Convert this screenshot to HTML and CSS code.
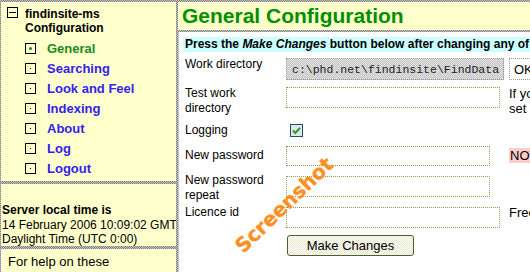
FILE: index.html
```html
<!DOCTYPE html>
<html lang="en">
<head>
    <meta charset="UTF-8">
    <meta name="viewport" content="width=device-width, initial-scale=1.0">
    <title>findinsite-ms - General Configuration</title>
<link rel="stylesheet" href="styles.css">
</head>
<body>
    <div class="frameset">
        <div class="side">
            <div class="panel nav">
                <div class="tree-root">
                    <span class="toggle"></span>
                    <div class="title">findinsite-ms<br>Configuration</div>
                </div>
                <ul class="menu">
                    <li class="current"><span class="bullet"></span><a href="#">General</a></li>
                    <li><span class="bullet"></span><a href="#">Searching</a></li>
                    <li><span class="bullet"></span><a href="#">Look and Feel</a></li>
                    <li><span class="bullet"></span><a href="#">Indexing</a></li>
                    <li><span class="bullet"></span><a href="#">About</a></li>
                    <li><span class="bullet"></span><a href="#">Log</a></li>
                    <li><span class="bullet"></span><a href="#">Logout</a></li>
                </ul>
            </div>
            <div class="panel clock">
                <b>Server local time is</b><br>
                14 February 2006 10:09:02 GMT<br>
                Daylight Time (UTC 0:00)
            </div>
            <div class="panel help">
                For help on these<br>configuration options, see the manual.
            </div>
        </div>

        <div class="main">
            <div class="header">
                <h1>General Configuration</h1>
            </div>
            <div class="content">
                <p class="notice">Press the <i>Make Changes</i> button below after changing any of the settings above.</p>

                <form class="form" id="configForm">
                    <div class="row row-dir">
                        <label for="workDir">Work directory</label>
                        <input type="text" id="workDir" class="input input-readonly w-218" value="c:\phd.net\findinsite\FindData" readonly>
                        <span class="note note-ok">OK</span>
                    </div>
                    <div class="row row-test">
                        <label for="testDir">Test work<br>directory</label>
                        <input type="text" id="testDir" class="input w-214">
                        <span class="note">If you want to test,<br>set a test directory</span>
                    </div>
                    <div class="row row-log">
                        <label>Logging</label>
                        <svg class="check" width="13" height="13" viewBox="0 0 13 13">
                            <rect x="0.5" y="0.5" width="12" height="12" fill="#e4e4e4" stroke="#1c4f80"/>
                            <path d="M3 6.5 L5.3 9 L10 3.8" fill="none" stroke="#22a022" stroke-width="2"/>
                        </svg>
                    </div>
                    <div class="row row-pass">
                        <label for="newPass">New password</label>
                        <input type="password" id="newPass" class="input w-204">
                        <span class="note note-warn">NOT SET</span>
                    </div>
                    <div class="row row-repeat">
                        <label for="newPass2">New password<br>repeat</label>
                        <input type="password" id="newPass2" class="input w-204">
                    </div>
                    <div class="row row-licence">
                        <label for="licence">Licence id</label>
                        <input type="text" id="licence" class="input w-214">
                        <span class="note">Free version</span>
                    </div>
                    <div class="row row-submit">
                        <span></span>
                        <button type="submit" class="btn-submit">Make Changes</button>
                    </div>
                </form>
            </div>
        </div>
    </div>

    <div class="stamp">Screenshot</div>

    <script>
        document.getElementById('configForm').addEventListener('submit', (e) => {
            e.preventDefault();
        });
    </script>
</body>
</html>
```

FILE: styles.css
```css
/* Global Styles */
:root {
    --frame: #ffffcc;
    --frame-edge: repeating-conic-gradient(#808080 0 25%, #c4c4c4 0 50%) 0 0 / 2px 2px;
    --link: #3322ee;
    --current: #1a8a1a;
    --field-edge: #8c9c5c;
}

* {
    margin: 0;
    padding: 0;
    box-sizing: border-box;
}

body {
    font-family: "Liberation Sans", Arial, sans-serif;
    font-size: 12px;
    color: #000;
    background: var(--frame-edge);
    height: 100vh;
    overflow: hidden;
    position: relative;
}

/* Frames */
.frameset {
    display: grid;
    grid-template-columns: 175px 1fr;
    column-gap: 2px;
    height: 100vh;
    padding: 2px 0 0 1px;
}

.side {
    display: flex;
    flex-direction: column;
    gap: 3px;
    min-height: 0;
}

.panel {
    background: var(--frame);
    overflow: hidden;
}

/* Navigation tree */
.nav {
    height: 179px;
    padding-top: 5px;
}

.tree-root {
    display: flex;
    align-items: flex-start;
    padding-left: 6px;
}

.toggle {
    width: 11px;
    height: 11px;
    border: 1px solid #000;
    margin-right: 7px;
    position: relative;
}

.toggle::after {
    content: "";
    position: absolute;
    left: 1px;
    right: 1px;
    top: 4px;
    height: 1px;
    background: #000;
}

.title {
    font-weight: bold;
    line-height: 14px;
}

.menu {
    list-style: none;
    margin-top: 3px;
}

.menu li {
    display: flex;
    align-items: center;
    height: 20px;
    padding-left: 24px;
}

.bullet {
    width: 11px;
    height: 11px;
    border: 1px solid #000;
    margin-right: 11px;
    display: flex;
    align-items: center;
    justify-content: center;
}

.bullet::after {
    content: "";
    width: 1px;
    height: 1px;
    background: #000;
}

.menu a {
    font-size: 13px;
    font-weight: bold;
    color: var(--link);
    text-decoration: none;
}

.menu .current a {
    color: var(--current);
}

.menu .current .bullet::after {
    width: 3px;
    height: 3px;
    border-radius: 50%;
    background: var(--current);
}

/* Side info */
.clock {
    height: 62px;
    padding: 19px 0 0 1px;
    line-height: 14.5px;
    white-space: nowrap;
}

.help {
    flex: 1;
    padding: 5px 6px;
    font-size: 13px;
    line-height: 15px;
    border-left: 1px solid #fff;
}

/* Main frame */
.main {
    display: flex;
    flex-direction: column;
    gap: 2px;
    min-width: 0;
}

.header {
    height: 28px;
    background: var(--frame);
    padding-left: 4px;
    display: flex;
    align-items: center;
}

h1 {
    font-size: 21px;
    font-weight: bold;
    color: #009000;
    white-space: nowrap;
}

.content {
    flex: 1;
    background: #fff;
    border-left: 1px solid #c4c4c4;
    padding-left: 4px;
    overflow: hidden;
}

.notice {
    margin-top: 5px;
    background: #ccffff;
    line-height: 15px;
    padding-left: 2px;
    font-weight: bold;
    white-space: nowrap;
    overflow: hidden;
}

/* Form rows */
.form {
    padding-left: 2px;
}

.row {
    display: grid;
    grid-template-columns: 101px 223px 1fr;
    align-items: start;
}

.row label {
    line-height: 15px;
    color: #000;
}

.row-dir { margin-top: 5px; }
.row-test { margin-top: 6px; }
.row-log { margin-top: 7px; }
.row-pass { margin-top: 8px; }
.row-repeat { margin-top: 7px; }
.row-licence { margin-top: 2px; }
.row-submit { margin-top: 7px; }

.row-dir .input,
.row-test .input,
.row-log .check,
.row-dir .note { margin-top: 1px; }
.row-pass label,
.row-pass .note { margin-top: 2px; }
.row-repeat .input { margin-top: 3px; }
.row-licence .input { margin-top: 2px; }

.input {
    height: 21px;
    border: 1px dotted var(--field-edge);
    background: #fff;
    font-family: "Liberation Sans", Arial, sans-serif;
    font-size: 12px;
    padding: 0 4px;
}

.row-dir .input { height: 22px; }
.row-pass .input { height: 20px; }

.input-readonly {
    background: repeating-conic-gradient(#c4c4c4 0 25%, #e2e2e2 0 50%) 0 0 / 2px 2px;
    border-color: #999;
    font-family: "Liberation Mono", "Courier New", monospace;
    font-size: 11.5px;
    color: #222;
    padding-left: 5px;
}

.w-218 { width: 218px; }
.w-214 { width: 214px; }
.w-204 { width: 204px; }

.check {
    display: block;
    margin-left: 4px;
}

.note {
    font-size: 13px;
    line-height: 15px;
    white-space: nowrap;
}

.note-ok {
    height: 22px;
    border: 1px dotted #999;
    padding: 3px 4px 0;
}

.note-warn {
    background: #ffcccc;
    padding: 0 1px;
}

.btn-submit {
    width: 127px;
    height: 21px;
    margin-left: 1px;
    border: 1px solid #4d5d2d;
    border-radius: 3px;
    background: repeating-conic-gradient(#fff 0 25%, #e8e8cc 0 50%) 0 0 / 2px 2px;
    font-family: "Liberation Sans", Arial, sans-serif;
    font-size: 13px;
    color: #000;
    cursor: pointer;
}

/* Watermark over the page */
.stamp {
    position: absolute;
    left: 284px;
    top: 205px;
    transform: translate(-50%, -50%) rotate(-44deg);
    font-family: "DejaVu Sans", sans-serif;
    font-size: 20px;
    font-weight: bold;
    color: #ff8f24;
    text-shadow: 0 0 1px #ffb060;
    pointer-events: none;
}
```
